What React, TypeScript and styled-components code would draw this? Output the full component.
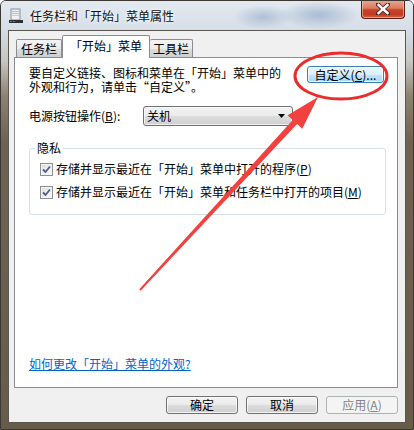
import * as React from 'react';
import styled, { createGlobalStyle } from 'styled-components';

const Global = createGlobalStyle`
  html, body { margin: 0; padding: 0; background: #ffffff; }
  body {
    font-family: "Noto Sans CJK SC", "Noto Sans", "Liberation Sans", sans-serif;
    font-size: 12px;
    color: #000;
  }
`;

const cjk = `"Noto Sans CJK SC", "Noto Sans", "Liberation Sans", sans-serif`;

const S = {
  Window: styled.div({
    position: 'relative',
    width: '414px',
    height: '430px',
    boxSizing: 'border-box',
    border: '1px solid #3b3732',
    borderRadius: '6px 6px 0 0',
    display: 'flex',
    flexDirection: 'column',
    overflow: 'hidden',
    background:
      'linear-gradient(180deg, #dfe6ee 0px, #d5dde6 28px, #c6c6c2 60px, #8c8272 95px, #6e6352 140px, #675b4a 100%)',
  }),
  TitleBar: styled.div({
    height: '29px',
    display: 'flex',
    alignItems: 'center',
    padding: '0 8px 0 7px',
    background:
      'radial-gradient(ellipse 40px 14px at 318px 14px, rgba(150,175,205,0.75), rgba(150,175,205,0) 100%), radial-gradient(ellipse 30px 12px at 262px 16px, rgba(120,150,190,0.45), rgba(120,150,190,0) 100%), linear-gradient(180deg, #e3e9f0, #d6dee7)',
  }),
  Title: styled.span({
    marginLeft: '6px',
    fontFamily: cjk,
    fontSize: '12px',
    color: '#111',
    textShadow: '0 0 6px #fff, 0 0 3px #fff',
  }),
  Close: styled.div({
    marginLeft: 'auto',
    alignSelf: 'flex-start',
    marginTop: '-1px',
    width: '44px',
    height: '19px',
    boxSizing: 'border-box',
    border: '1px solid #5a1f15',
    borderTop: 'none',
    borderRadius: '0 0 4px 4px',
    display: 'flex',
    alignItems: 'center',
    justifyContent: 'center',
    background: 'linear-gradient(180deg, #e9a995 0%, #dc7a62 45%, #c8432a 55%, #c23a22 80%, #d8634a 100%)',
    boxShadow: 'inset 0 0 0 1px rgba(255,220,200,0.5)',
  }),
  Client: styled.div({
    flex: 1,
    margin: '0 7px 6px',
    border: '1px solid #5b5750',
    background: '#f0f0f0',
    display: 'flex',
    flexDirection: 'column',
    padding: '4px 7px 8px 5px',
    minHeight: 0,
  }),
  TabStrip: styled.div({
    display: 'flex',
    alignItems: 'flex-end',
    height: '22px',
    paddingLeft: '2px',
    position: 'relative',
    zIndex: 1,
  }),
  Tab: styled.div<{ $active?: boolean; $w: number; $joined?: boolean }>(
    {
      boxSizing: 'border-box',
      display: 'flex',
      alignItems: 'center',
      justifyContent: 'center',
      border: '1px solid #898c95',
      borderBottom: 'none',
      borderRadius: '2px 2px 0 0',
      fontFamily: cjk,
      fontSize: '12px',
      lineHeight: '14px',
    },
    ({ $active, $w, $joined }) => ({
      width: `${$w}px`,
      height: $active ? '23px' : '18px',
      marginBottom: $active ? '-1px' : '0',
      background: $active ? '#ffffff' : 'linear-gradient(180deg, #f3f3f3 0%, #ebebeb 50%, #dddddd 51%, #cfcfcf 100%)',
      borderLeftWidth: $joined ? '0' : '1px',
      paddingBottom: $active ? '2px' : '0',
    })
  ),
  Panel: styled.div({
    flex: 1,
    background: '#ffffff',
    border: '1px solid #898c95',
    display: 'flex',
    flexDirection: 'column',
    padding: '8px 11px 16px 14px',
  }),
  IntroRow: styled.div({
    display: 'flex',
    justifyContent: 'space-between',
    alignItems: 'flex-start',
  }),
  Intro: styled.p({
    margin: 0,
    fontFamily: cjk,
    fontSize: '12px',
    lineHeight: '14px',
  }),
  Button: styled.div<{ $hot?: boolean; $disabled?: boolean; $w: number; $h: number }>(
    {
      boxSizing: 'border-box',
      display: 'flex',
      alignItems: 'center',
      justifyContent: 'center',
      borderRadius: '3px',
      fontFamily: cjk,
      fontSize: '12px',
      lineHeight: '14px',
      whiteSpace: 'nowrap',
    },
    ({ $hot, $disabled, $w, $h }) => ({
      width: `${$w}px`,
      height: `${$h}px`,
      border: `1px solid ${$hot ? '#3c7fb1' : $disabled ? '#adb2b5' : '#707070'}`,
      color: $disabled ? '#838383' : '#000',
      background: $hot
        ? 'linear-gradient(180deg, #eaf6fd 0%, #d9f0fc 50%, #bee6fd 51%, #a7d9f5 100%)'
        : $disabled
        ? '#f4f4f4'
        : 'linear-gradient(180deg, #f2f2f2 0%, #ebebeb 50%, #dddddd 51%, #cfcfcf 100%)',
      boxShadow: $disabled ? 'none' : 'inset 0 0 0 1px rgba(255,255,255,0.75)',
    })
  ),
  FieldRow: styled.div({
    display: 'flex',
    alignItems: 'center',
    marginTop: '12px',
  }),
  FieldLabel: styled.span({
    width: '114px',
    fontFamily: cjk,
    fontSize: '12px',
    lineHeight: '14px',
  }),
  Select: styled.div({
    boxSizing: 'border-box',
    width: '150px',
    height: '20px',
    border: '1px solid #707070',
    borderRadius: '3px',
    display: 'flex',
    alignItems: 'center',
    justifyContent: 'space-between',
    padding: '0 7px 0 3px',
    background: 'linear-gradient(180deg, #f2f2f2 0%, #ebebeb 50%, #dddddd 51%, #cfcfcf 100%)',
    boxShadow: 'inset 0 0 0 1px rgba(255,255,255,0.7)',
    fontFamily: cjk,
    fontSize: '12px',
    lineHeight: '14px',
  }),
  Group: styled.fieldset({
    margin: '16px 0 0',
    padding: '6px 0 13px 10px',
    border: '1px solid #d5dfe5',
    borderRadius: '3px',
    display: 'flex',
    flexDirection: 'column',
    gap: '5px',
    minWidth: 0,
  }),
  Legend: styled.legend({
    marginLeft: '-5px',
    padding: '0 2px',
    fontFamily: cjk,
    fontSize: '12px',
    lineHeight: '12px',
  }),
  CheckRow: styled.label({
    display: 'flex',
    alignItems: 'center',
    gap: '3px',
    height: '18px',
    fontFamily: cjk,
    fontSize: '12px',
    lineHeight: '14px',
  }),
  Box: styled.span({
    boxSizing: 'border-box',
    width: '13px',
    height: '13px',
    flexShrink: 0,
    border: '1px solid #8e8f8f',
    background: 'linear-gradient(135deg, #dcdcdc 0%, #f0f0f0 60%, #fbfbfb 100%)',
    boxShadow: 'inset 0 0 0 1px #f4f4f4',
    display: 'flex',
    alignItems: 'center',
    justifyContent: 'center',
  }),
  Link: styled.a({
    marginTop: 'auto',
    alignSelf: 'flex-start',
    color: '#0066cc',
    textDecoration: 'underline',
    fontFamily: cjk,
    fontSize: '12px',
    lineHeight: '14px',
  }),
  ButtonRow: styled.div({
    display: 'flex',
    justifyContent: 'flex-end',
    gap: '8px',
    marginTop: '8px',
  }),
  Overlay: styled.svg({
    position: 'absolute',
    left: '-1px',
    top: '-1px',
    pointerEvents: 'none',
  }),
};

const AppIcon = () => (
  <svg width="16" height="16" viewBox="0 0 16 16">
    <rect x="3" y="1" width="9" height="11" fill="#eef0f2" stroke="#8a8f96" strokeWidth="1" />
    <rect x="4" y="3" width="7" height="1" fill="#b9bec4" />
    <rect x="4" y="5" width="7" height="1" fill="#b9bec4" />
    <rect x="4" y="7" width="7" height="1" fill="#c9cdd2" />
    <rect x="1" y="12" width="14" height="3" fill="#2c2f33" />
    <rect x="2" y="13" width="2" height="1" fill="#3fa24a" />
    <rect x="5" y="13" width="2" height="1" fill="#3e7fd0" />
  </svg>
);

const CloseGlyph = () => (
  <svg width="14" height="12" viewBox="0 0 14 12">
    <path d="M2 1.5 L12 10.5 M12 1.5 L2 10.5" stroke="#4a2a22" strokeWidth="4.2" strokeLinecap="square" />
    <path d="M2.5 2 L11.5 10 M11.5 2 L2.5 10" stroke="#ffffff" strokeWidth="2.4" strokeLinecap="square" />
  </svg>
);

const Check = () => (
  <S.Box>
    <svg width="9" height="9" viewBox="0 0 9 9">
      <path d="M1 4.5 L3.5 7 L8 1.5" fill="none" stroke="#4a5d91" strokeWidth="1.8" />
    </svg>
  </S.Box>
);

const tabs = [
  { label: '任务栏', w: 46 },
  { label: '「开始」菜单', w: 88, active: true },
  { label: '工具栏', w: 43, joined: true },
];

export default function App() {
  return (
    <>
      <Global />
      <S.Window>
        <S.TitleBar>
          <AppIcon />
          <S.Title>任务栏和「开始」菜单属性</S.Title>
          <S.Close>
            <CloseGlyph />
          </S.Close>
        </S.TitleBar>
        <S.Client>
          <S.TabStrip>
            {tabs.map(t => (
              <S.Tab key={t.label} $active={t.active} $w={t.w} $joined={t.joined}>
                {t.label}
              </S.Tab>
            ))}
          </S.TabStrip>
          <S.Panel>
            <S.IntroRow>
              <S.Intro>
                要自定义链接、图标和菜单在「开始」菜单中的
                <br />
                外观和行为，请单击“自定义”。
              </S.Intro>
              <S.Button $hot $w={77} $h={17} style={{ marginRight: 2 }}>
                自定义(<u>C</u>)...
              </S.Button>
            </S.IntroRow>
            <S.FieldRow>
              <S.FieldLabel>
                电源按钮操作(<u>B</u>):
              </S.FieldLabel>
              <S.Select>
                <span>关机</span>
                <svg width="7" height="4" viewBox="0 0 7 4">
                  <path d="M0 0 H7 L3.5 4 Z" fill="#000" />
                </svg>
              </S.Select>
            </S.FieldRow>
            <S.Group>
              <S.Legend>隐私</S.Legend>
              <S.CheckRow>
                <Check />
                <span>
                  存储并显示最近在「开始」菜单中打开的程序(<u>P</u>)
                </span>
              </S.CheckRow>
              <S.CheckRow>
                <Check />
                <span>
                  存储并显示最近在「开始」菜单和任务栏中打开的项目(<u>M</u>)
                </span>
              </S.CheckRow>
            </S.Group>
            <S.Link href="#">如何更改「开始」菜单的外观?</S.Link>
          </S.Panel>
          <S.ButtonRow>
            <S.Button $w={72} $h={18}>确定</S.Button>
            <S.Button $w={72} $h={18}>取消</S.Button>
            <S.Button $w={72} $h={18} $disabled>
              应用(<u>A</u>)
            </S.Button>
          </S.ButtonRow>
        </S.Client>
        <S.Overlay width="414" height="430" viewBox="0 0 414 430">
          <ellipse cx="341" cy="76" rx="46" ry="23" fill="none" stroke="#ec2d2d" strokeWidth="3" />
          <polygon
            points="139.3,289.3 292.7,120 287.6,115.2 318,97 302.3,128.8 297.1,124 140.7,290.7"
            fill="#f2413f"
          />
        </S.Overlay>
      </S.Window>
    </>
  );
}
